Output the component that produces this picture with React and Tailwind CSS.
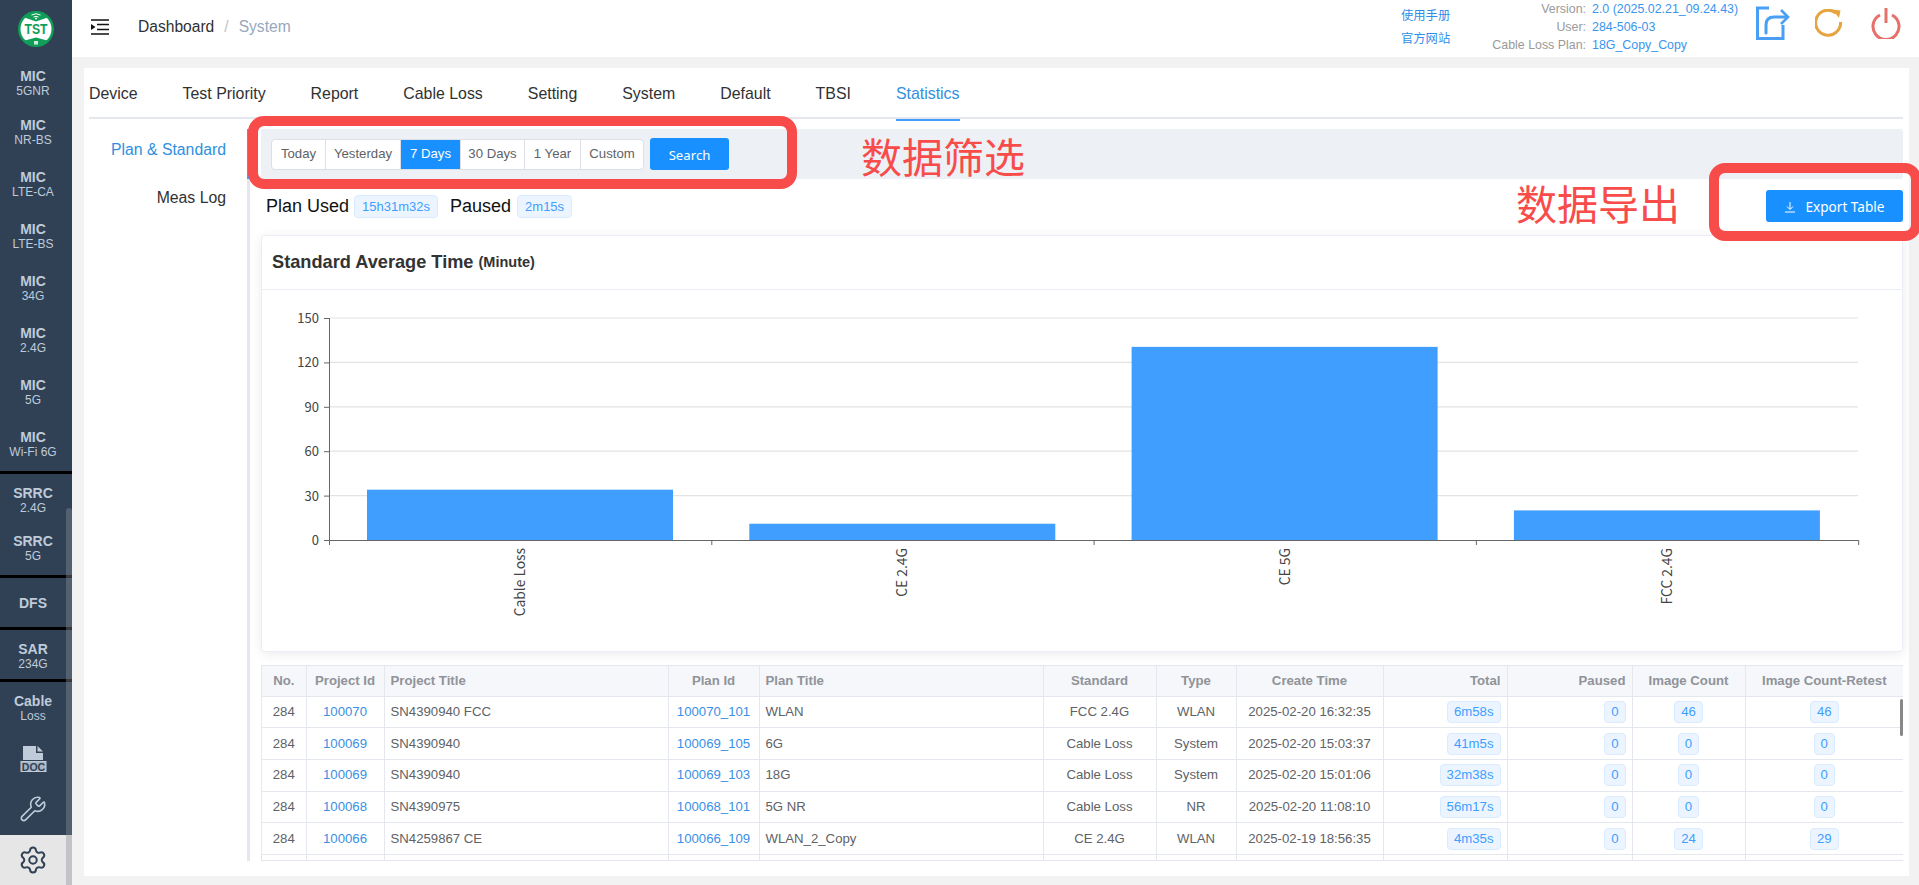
import { Settings, Wrench } from "lucide-react";

const sideItems = [
  { title: "MIC", sub: "5GNR", box: "h-[51px] pt-[2px]" },
  { title: "MIC", sub: "NR-BS", box: "h-[51px] pb-[2px]" },
  { title: "MIC", sub: "LTE-CA", box: "h-[52px]" },
  { title: "MIC", sub: "LTE-BS", box: "h-[52px]" },
  { title: "MIC", sub: "34G", box: "h-[52px]" },
  { title: "MIC", sub: "2.4G", box: "h-[52px]" },
  { title: "MIC", sub: "5G", box: "h-[52px]" },
  { title: "MIC", sub: "Wi-Fi 6G", box: "h-[52px]" },
  { title: "SRRC", sub: "2.4G", box: "h-[54px] pt-[2px]", line: true },
  { title: "SRRC", sub: "5G", box: "h-[50px] pb-[2px]" },
  { title: "DFS", box: "h-[52px] pt-[1px]", line: true },
  { title: "SAR", sub: "234G", box: "h-[52px] pt-[4px]", line: true },
  { title: "Cable", sub: "Loss", box: "h-[56px]", line: true },
];

const tabs = ["Device", "Test Priority", "Report", "Cable Loss", "Setting", "System", "Default", "TBSI", "Statistics"];

const ranges = [
  { label: "Today", w: "w-[53px]" },
  { label: "Yesterday", w: "w-[75px]" },
  { label: "7 Days", w: "w-[60px]", active: true },
  { label: "30 Days", w: "w-[64px]" },
  { label: "1 Year", w: "w-[56px]" },
  { label: "Custom", w: "w-[63px]" },
];

const columns = [
  { label: "No.", w: "w-[44px]", head: "text-center" },
  { label: "Project Id", w: "w-[78px]", head: "text-center" },
  { label: "Project Title", w: "w-[284px]", head: "text-left" },
  { label: "Plan Id", w: "w-[91px]", head: "text-center" },
  { label: "Plan Title", w: "w-[284px]", head: "text-left" },
  { label: "Standard", w: "w-[113px]", head: "text-center" },
  { label: "Type", w: "w-[80px]", head: "text-center" },
  { label: "Create Time", w: "w-[147px]", head: "text-center" },
  { label: "Total", w: "w-[124px]", head: "text-right" },
  { label: "Paused", w: "w-[125px]", head: "text-right" },
  { label: "Image Count", w: "w-[113px]", head: "text-center" },
  { label: "Image Count-Retest", w: "w-[158px]", head: "text-center" },
];

const rows = [
  ["100070", "SN4390940 FCC", "100070_101", "WLAN", "FCC 2.4G", "WLAN", "2025-02-20 16:32:35", "6m58s", "0", "46", "46"],
  ["100069", "SN4390940", "100069_105", "6G", "Cable Loss", "System", "2025-02-20 15:03:37", "41m5s", "0", "0", "0"],
  ["100069", "SN4390940", "100069_103", "18G", "Cable Loss", "System", "2025-02-20 15:01:06", "32m38s", "0", "0", "0"],
  ["100068", "SN4390975", "100068_101", "5G NR", "Cable Loss", "NR", "2025-02-20 11:08:10", "56m17s", "0", "0", "0"],
  ["100066", "SN4259867 CE", "100066_109", "WLAN_2_Copy", "CE 2.4G", "WLAN", "2025-02-19 18:56:35", "4m35s", "0", "24", "29"],
];

function Badge({ children, className = "" }) {
  return (
    <span className={`inline-block h-[22px] rounded-[4px] border border-[#d9ecff] bg-[#ecf5ff] px-[6px] align-middle text-[13.2px] leading-[20px] text-[#409eff] ${className}`}>
      {children}
    </span>
  );
}

function Logo() {
  return (
    <svg width="36" height="36" viewBox="0 0 36 36">
      <circle cx="18" cy="18" r="18" fill="#0f9d58" />
      <circle cx="18" cy="18" r="15.5" fill="#fff" />
      <path d="M5 6 L18 10.5 L31 6 A18 18 0 0 0 5 6 Z" fill="#0f9d58" />
      <path d="M5 30 L18 26.5 L31 30 A18 18 0 0 1 5 30 Z" fill="#0f9d58" />
      <path d="M13.5 4 Q18 1.5 22.5 4 M15.5 6 Q18 4.8 20.5 6" stroke="#fff" strokeWidth="1" fill="none" />
      <circle cx="18" cy="7.5" r="0.9" fill="#fff" />
      <rect x="16" y="30" width="4" height="3.5" fill="#fff" opacity="0.8" />
      <text x="18" y="23" textAnchor="middle" fontSize="14" fontWeight="700" textLength="23" lengthAdjust="spacingAndGlyphs" fontFamily="Liberation Sans, sans-serif" fill="#0f9d58">
        TST
      </text>
    </svg>
  );
}

function Sidebar() {
  return (
    <aside className="relative flex h-[885px] w-[72px] shrink-0 flex-col overflow-hidden bg-[#304156] text-[#bfcbd9]">
      <div className="flex h-[57px] shrink-0 items-center justify-center pr-[1px]">
        <Logo />
      </div>
      {sideItems.map((item, i) => (
        <div key={i} className={`${item.line ? "border-t-[3px] border-black" : ""} ${item.box} flex shrink-0 flex-col items-center justify-center pr-[6px] text-center`}>
          <div className="text-[14px] font-bold leading-[15px]">{item.title}</div>
          {item.sub && <div className="text-[12px] leading-[15px]">{item.sub}</div>}
        </div>
      ))}
      <div className="flex h-[47px] shrink-0 flex-col items-center justify-center pr-[6px]">
        <svg width="27" height="26" viewBox="0 0 27 26">
          <path d="M3 0 H16 V7 H23 V14 H3 Z" fill="#bfcbd9" />
          <path d="M17.5 0 L23 5.5 H17.5 Z" fill="#bfcbd9" />
          <rect x="0.5" y="15" width="26" height="11" fill="#bfcbd9" />
          <rect x="1.5" y="16" width="24" height="9" fill="#304156" fillOpacity="0.15" />
          <text x="13.5" y="24.5" textAnchor="middle" fontSize="10.5" fontWeight="700" fontFamily="Liberation Sans, sans-serif" fill="#304156">DOC</text>
        </svg>
      </div>
      <div className="flex h-[53px] shrink-0 items-center justify-center pr-[6px]">
        <Wrench size={28} strokeWidth={1.4} />
      </div>
      <div className="flex h-[50px] shrink-0 items-center justify-center bg-[#e6e6e6] pr-[6px] text-[#304156]">
        <Settings size={30} strokeWidth={1.6} />
      </div>
      <div className="absolute bottom-0 right-0 top-[508px] w-[6px] rounded-t-[3px] bg-[#8a8f98]/40" />
    </aside>
  );
}

function Header() {
  return (
    <header className="flex h-[57px] shrink-0 items-center bg-white pb-[4px] pl-[19px] pr-[18px]">
      <svg width="18" height="16" viewBox="0 0 18 16" className="shrink-0">
        <path d="M0 1 H18 M6 5.5 H18 M6 10.5 H18 M0 15 H18" stroke="#111" strokeWidth="1.5" />
        <path d="M0 5 L4.5 8 L0 11 Z" fill="#111" />
      </svg>
      <div className="ml-[29px] text-[15.6px] text-[#303133]">Dashboard</div>
      <div className="mx-[10px] text-[15.6px] text-[#c0c4cc]">/</div>
      <div className="text-[15.6px] text-[#97a8be]">System</div>
      <div className="ml-auto flex w-[50px] flex-col gap-[11px] pt-[1px] text-[12.3px] leading-[12px] text-[#2f8fe8] [font-family:'Liberation_Sans','Noto_Sans_CJK_SC',sans-serif]">
        <span>使用手册</span>
        <span>官方网站</span>
      </div>
      <div className="ml-[40px] grid grid-cols-[95px_158px] gap-x-[6px] whitespace-nowrap text-[12.4px] leading-[18px]">
        <span className="text-right text-[#9a9a9a]">Version:</span>
        <span className="text-[#3a95ee]">2.0 (2025.02.21_09.24.43)</span>
        <span className="text-right text-[#9a9a9a]">User:</span>
        <span className="text-[#3a95ee]">284-506-03</span>
        <span className="text-right text-[#9a9a9a]">Cable Loss Plan:</span>
        <span className="text-[#3a95ee]">18G_Copy_Copy</span>
      </div>
      <div className="-mt-[7px] ml-[6px] flex items-center">
        <svg width="34" height="34" viewBox="0 0 34 34" fill="none" stroke="#4a9ff5" strokeWidth="3">
          <path d="M13 2 H1.5 V32.5 H27 V19" />
          <path d="M10 27 V19 Q10 11 18 11 H31" strokeLinecap="round" />
          <path d="M25 4 L32 11 L25 18" strokeWidth="2.6" />
        </svg>
        <svg width="28" height="28" viewBox="0 0 28 28" fill="none" className="ml-[25px]">
          <path d="M21 4 A12.5 12.5 0 1 0 25.6 13" stroke="#e6a33e" strokeWidth="3" />
          <path d="M17.5 0.5 L25.5 1.5 L24 9 Z" fill="#e6a33e" />
        </svg>
        <svg width="30" height="31" viewBox="0 0 30 31" fill="none" stroke="#e8706b" strokeWidth="3" className="ml-[28px]">
          <path d="M9 7 A13 13 0 1 0 21 7" />
          <path d="M15 0 V15" />
        </svg>
      </div>
    </header>
  );
}

function Chart() {
  const ticks = [0, 30, 60, 90, 120, 150];
  const bars = [
    { label: "Cable Loss", value: 34 },
    { label: "CE 2.4G", value: 11 },
    { label: "CE 5G", value: 130.5 },
    { label: "FCC 2.4G", value: 20 },
  ];
  const y = (v) => 251 - (v / 150) * 222;
  const font = "Noto Sans CJK SC, Noto Sans, sans-serif";
  return (
    <svg width="1640" height="361" viewBox="1 1 1640 361" className="block">
      {ticks.slice(1).map((t) => (
        <line key={t} x1="68" x2="1597" y1={y(t)} y2={y(t)} stroke="#e3e3e3" strokeWidth="1.2" />
      ))}
      {bars.map((b, i) => (
        <rect key={b.label} x={106 + i * 382.3} y={y(b.value)} width="306" height={251 - y(b.value)} fill="#409eff" />
      ))}
      <line x1="68.5" x2="68.5" y1="29" y2="251" stroke="#666" />
      <line x1="63" x2="1597" y1="251.5" y2="251.5" stroke="#666" />
      {ticks.map((t) => (
        <g key={t}>
          <line x1="63" x2="68" y1={y(t) + 0.5} y2={y(t) + 0.5} stroke="#666" />
          <text x="58" y={y(t) + 5} textAnchor="end" fontSize="13" fontFamily={font} fill="#444">{t}</text>
        </g>
      ))}
      {[0, 1, 2, 3, 4].map((i) => (
        <line key={i} x1={68.5 + i * 382.3} x2={68.5 + i * 382.3} y1="251" y2="256" stroke="#666" />
      ))}
      {bars.map((b, i) => (
        <text
          key={b.label}
          transform={`translate(${264 + i * 382.3} 259) rotate(-90)`}
          textAnchor="end"
          fontSize="13.8"
          fontFamily={font}
          fill="#444"
        >
          {b.label}
        </text>
      ))}
    </svg>
  );
}

function DataTable() {
  return (
    <div className="relative mt-[13px] h-[196px] overflow-hidden border-b border-l border-t border-[#e4e8ee]">
      <table className="w-[1641px] table-fixed border-collapse text-[13.2px] text-[#606266]">
        <colgroup>
          {columns.map((c) => (
            <col key={c.label} className={c.w} />
          ))}
        </colgroup>
        <thead>
          <tr className="h-[30px] bg-[#f5f7fa]">
            {columns.map((c, i) => (
              <th key={c.label} className={`${c.head} ${i === columns.length - 1 ? "" : "border-r"} overflow-hidden whitespace-nowrap border-b border-[#e4e8ee] px-[6px] font-bold text-[#909399]`}>
                {c.label}
              </th>
            ))}
          </tr>
        </thead>
        <tbody>
          {rows.map((r, i) => (
            <tr key={i} className="h-[31.7px]">
              <td className="border-b border-r border-[#e4e8ee] text-center">284</td>
              <td className="border-b border-r border-[#e4e8ee] text-center text-[#3a8fe6]">{r[0]}</td>
              <td className="border-b border-r border-[#e4e8ee] px-[6px]">{r[1]}</td>
              <td className="border-b border-r border-[#e4e8ee] text-center text-[#3a8fe6]">{r[2]}</td>
              <td className="border-b border-r border-[#e4e8ee] px-[6px]">{r[3]}</td>
              <td className="border-b border-r border-[#e4e8ee] text-center">{r[4]}</td>
              <td className="border-b border-r border-[#e4e8ee] text-center">{r[5]}</td>
              <td className="border-b border-r border-[#e4e8ee] text-center">{r[6]}</td>
              <td className="border-b border-r border-[#e4e8ee] px-[6px] text-right"><Badge>{r[7]}</Badge></td>
              <td className="border-b border-r border-[#e4e8ee] px-[6px] text-right"><Badge>{r[8]}</Badge></td>
              <td className="border-b border-r border-[#e4e8ee] text-center"><Badge>{r[9]}</Badge></td>
              <td className="border-b border-[#e4e8ee] text-center"><Badge>{r[10]}</Badge></td>
            </tr>
          ))}
          {/* next row is scrolled out of the box, only the badge tops show */}
          <tr className="h-[31.7px]">
            <td className="border-r border-[#e4e8ee]" />
            <td className="border-r border-[#e4e8ee]" />
            <td className="border-r border-[#e4e8ee]" />
            <td className="border-r border-[#e4e8ee]" />
            <td className="border-r border-[#e4e8ee]" />
            <td className="border-r border-[#e4e8ee]" />
            <td className="border-r border-[#e4e8ee]" />
            <td className="border-r border-[#e4e8ee]" />
            <td className="border-r border-[#e4e8ee] px-[6px] text-right"><Badge className="w-[55px]" /></td>
            <td className="border-r border-[#e4e8ee] px-[6px] text-right"><Badge className="w-[21px]" /></td>
            <td className="border-r border-[#e4e8ee] text-center"><Badge className="w-[28px]" /></td>
            <td className="text-center"><Badge className="w-[28px]" /></td>
          </tr>
        </tbody>
      </table>
      <div className="absolute right-0 top-[33px] h-[37px] w-[3px] rounded-[2px] bg-[#888]" />
    </div>
  );
}

function Statistics() {
  return (
    <div className="relative min-w-0 flex-1 border-l-[3px] border-[#e4e7ed] pl-[11px]">
      <div className="absolute -left-[3px] top-0 h-[50px] w-[3px] bg-[#409eff]" />
      <div className="flex h-[50px] items-center gap-[6px] rounded-[2px] bg-[#edf0f5] pl-[10px]">
        <div className="flex h-[31px] overflow-hidden rounded-[4px] border border-[#dcdfe6] bg-white">
          {ranges.map((r, i) => (
            <div
              key={r.label}
              className={`${r.w} ${r.active ? "bg-[#1890ff] text-white" : "text-[#606266]"} ${i > 0 ? "border-l border-[#dcdfe6]" : ""} flex items-center justify-center text-[13.2px]`}
            >
              {r.label}
            </div>
          ))}
        </div>
        <div className="flex h-[32px] w-[79px] items-center justify-center rounded-[3px] bg-[#1890ff] pt-[3px] text-[13.2px] text-white [font-family:'Noto_Sans',sans-serif]">
          Search
        </div>
      </div>

      <div className="flex h-[56px] items-start">
        <div className="mt-[15px] flex items-center pl-[5px]">
          <span className="text-[18px] leading-[24px] text-[#111]">Plan Used</span>
          <span className="ml-[5px] inline-block h-[23px] rounded-[4px] border border-[#d9ecff] bg-[#ecf5ff] px-[7px] text-[13px] leading-[21px] text-[#409eff]">15h31m32s</span>
          <span className="ml-[12px] text-[18px] leading-[24px] text-[#111]">Paused</span>
          <span className="ml-[6px] inline-block h-[23px] rounded-[4px] border border-[#d9ecff] bg-[#ecf5ff] px-[7px] text-[13px] leading-[21px] text-[#409eff]">2m15s</span>
        </div>
        <div className="ml-auto mt-[11px] flex h-[32px] w-[137px] items-center justify-center gap-[9px] rounded-[3px] bg-[#1890ff] pt-[2px] text-[13.6px] text-white [font-family:'Noto_Sans',sans-serif]">
          <svg width="12" height="12" viewBox="0 0 12 12" fill="none" stroke="#fff" strokeWidth="1">
            <path d="M6 1 V8 M3 5.5 L6 8.5 L9 5.5 M1 11 H11" />
          </svg>
          Export Table
        </div>
      </div>

      <div className="h-[417px] rounded-[4px] border border-[#ebeef5] bg-white shadow-[0_2px_12px_rgba(0,0,0,0.08)]">
        <div className="flex h-[54px] items-center border-b border-[#ebeef5] pl-[10px] font-bold text-[#333]">
          <span className="text-[18.2px]">Standard Average Time</span>
          <span className="ml-[5px] text-[14.5px]">(Minute)</span>
        </div>
        <Chart />
      </div>

      <DataTable />
    </div>
  );
}

export default function App() {
  return (
    <div className="relative flex h-[885px] w-[1919px] overflow-hidden bg-[#f2f2f2] font-['Liberation_Sans',Arial,sans-serif]">
      <Sidebar />
      <div className="flex min-w-0 flex-1 flex-col">
        <Header />
        <main className="mb-[9px] ml-[12px] mr-[10px] mt-[11px] flex-1 bg-white pl-[5px] pr-[6px]">
          <div className="flex h-[51px] items-start gap-[45px] border-b-2 border-[#e4e7ed] pt-[16px] text-[15.9px] leading-[20px] text-[#303133]">
            {tabs.map((t) => (
              <div key={t} className={t === "Statistics" ? "relative text-[#2f8fe0]" : ""}>
                {t}
                {t === "Statistics" && <div className="absolute -bottom-[17px] left-0 h-[2px] w-full bg-[#409eff]" />}
              </div>
            ))}
          </div>
          <div className="mt-[10px] flex">
            <div className="w-[158px] shrink-0 pr-[21px] text-right text-[15.8px]">
              <div className="flex h-[40px] items-center justify-end pt-[2px] text-[#2f8fe0]">Plan &amp; Standard</div>
              <div className="mt-[7px] flex h-[40px] items-center justify-end pt-[3px] text-[#303133]">Meas Log</div>
            </div>
            <Statistics />
          </div>
        </main>
      </div>

      {/* red annotations drawn over the screenshot */}
      <div className="absolute left-[248px] top-[116px] h-[73px] w-[549px] rounded-[16px] border-[10px] border-[#f84c4a]" />
      <div className="absolute left-[1709px] top-[163px] h-[78px] w-[212px] rounded-[16px] border-[10px] border-[#f84c4a]" />
      <div className="absolute left-[861px] top-[131px] text-[41px] leading-[48px] text-[#f84c4a] [font-family:'Noto_Sans_CJK_SC',sans-serif]">数据筛选</div>
      <div className="absolute left-[1516px] top-[178px] text-[41px] leading-[48px] text-[#f84c4a] [font-family:'Noto_Sans_CJK_SC',sans-serif]">数据导出</div>
    </div>
  );
}
